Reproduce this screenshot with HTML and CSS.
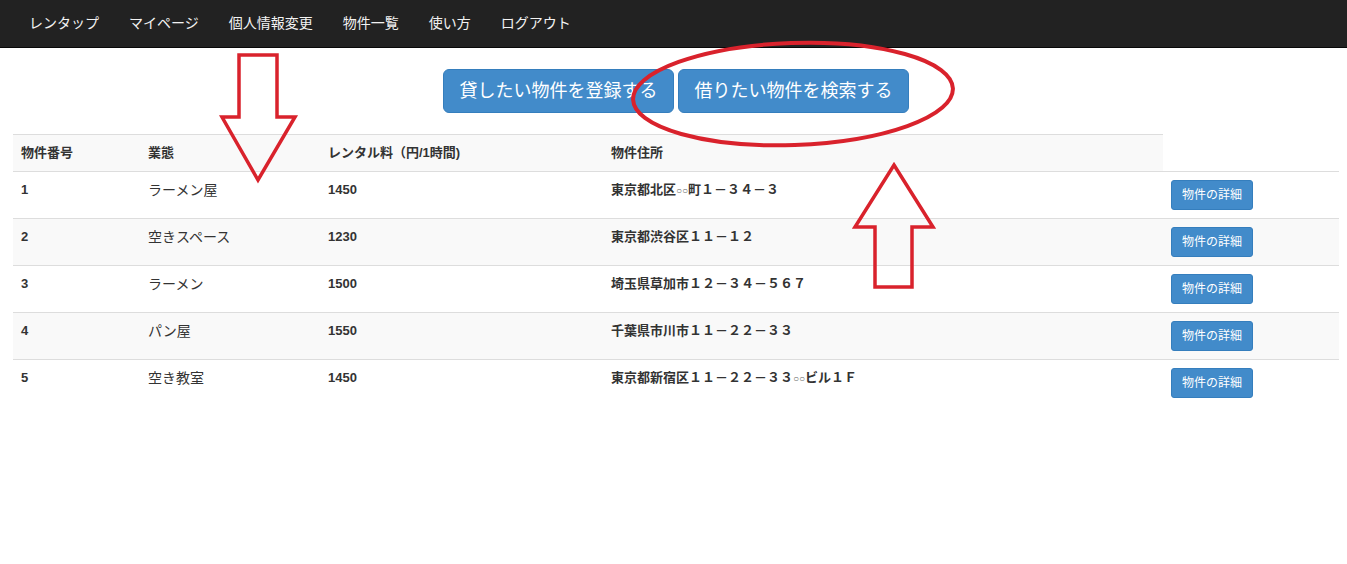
FILE: index.html
```html
<!DOCTYPE html>
<html lang="ja">
<head>
<meta charset="utf-8">
<title>レンタップ</title>
<link rel="stylesheet" href="styles.css">
</head>
<body>
<nav class="navbar">
  <a class="nav-link" href="#">レンタップ</a>
  <a class="nav-link" href="#">マイページ</a>
  <a class="nav-link" href="#">個人情報変更</a>
  <a class="nav-link" href="#">物件一覧</a>
  <a class="nav-link" href="#">使い方</a>
  <a class="nav-link" href="#">ログアウト</a>
</nav>
<main class="content">
  <div class="actions">
    <a class="btn btn-lg" href="#">貸したい物件を登録する</a>
    <a class="btn btn-lg" href="#">借りたい物件を検索する</a>
  </div>
  <table class="table">
    <colgroup>
      <col class="c1"><col class="c2"><col class="c3"><col class="c4"><col class="c5">
    </colgroup>
    <tbody>
      <tr>
        <th>物件番号</th><th>業態</th><th>レンタル料（円/1時間)</th><th>物件住所</th>
      </tr>
      <tr>
        <td class="b">1</td><td>ラーメン屋</td><td class="b">1450</td><td class="b">東京都北区<span class="small">○○</span>町１－３４－３</td>
        <td><a class="btn btn-sm" href="#">物件の詳細</a></td>
      </tr>
      <tr>
        <td class="b">2</td><td>空きスペース</td><td class="b">1230</td><td class="b">東京都渋谷区１１－１２</td>
        <td><a class="btn btn-sm" href="#">物件の詳細</a></td>
      </tr>
      <tr>
        <td class="b">3</td><td>ラーメン</td><td class="b">1500</td><td class="b">埼玉県草加市１２－３４－５６７</td>
        <td><a class="btn btn-sm" href="#">物件の詳細</a></td>
      </tr>
      <tr>
        <td class="b">4</td><td>パン屋</td><td class="b">1550</td><td class="b">千葉県市川市１１－２２－３３</td>
        <td><a class="btn btn-sm" href="#">物件の詳細</a></td>
      </tr>
      <tr>
        <td class="b">5</td><td>空き教室</td><td class="b">1450</td><td class="b">東京都新宿区１１－２２－３３<span class="small">○○</span>ビル１Ｆ</td>
        <td><a class="btn btn-sm" href="#">物件の詳細</a></td>
      </tr>
    </tbody>
  </table>
</main>
<svg class="annotations" width="1347" height="564" viewBox="0 0 1347 564" aria-hidden="true">
  <polygon points="239,55 277,55 277,117 295,117 258,180 222,117 239,117" />
  <polygon points="894,165 933,227 912,227 912,287 875,287 875,227 855,227" />
  <ellipse cx="793" cy="94" rx="160" ry="51" transform="rotate(-2 793 94)" />
</svg>
</body>
</html>
```

FILE: styles.css
```css
html, body {
  margin: 0;
  padding: 0;
  background: #fff;
}

body {
  font-family: "Liberation Sans", "Noto Sans CJK JP", sans-serif;
  font-size: 14px;
  line-height: 20px;
  color: #333;
  position: relative;
  width: 1347px;
  height: 564px;
  overflow: hidden;
}

.navbar {
  display: flex;
  align-items: center;
  height: 47px;
  padding-left: 14px;
  background: #222;
  border-bottom: 1px solid #080808;
}

.nav-link {
  padding: 0 15px;
  color: #f2f2f2;
  text-decoration: none;
  font-size: 14px;
  line-height: 20px;
  margin-top: -2px;
}

.content {
  padding: 21px 8px 0 13px;
}

.actions {
  display: flex;
  justify-content: center;
  gap: 4px;
  margin-bottom: 21px;
}

.btn {
  display: inline-block;
  color: #fff;
  background: #428bca;
  border: 1px solid #357ebd;
  text-decoration: none;
  text-align: center;
  white-space: nowrap;
}

.btn-lg {
  font-size: 18px;
  line-height: 22px;
  padding: 10px 15.5px;
  border-radius: 6px;
}

.btn-sm {
  font-size: 12px;
  line-height: 18px;
  padding: 5px 10px;
  border-radius: 3px;
}

.table {
  width: 1326px;
  table-layout: fixed;
  border-collapse: collapse;
  border-spacing: 0;
}

.c1 { width: 127px; }
.c2 { width: 180px; }
.c3 { width: 283px; }
.c4 { width: 560px; }
.c5 { width: 176px; }

.table th,
.table td {
  padding: 8px;
  text-align: left;
  vertical-align: top;
  border-top: 1px solid #ddd;
  line-height: 20px;
  background: #fff;
}

.table th {
  font-weight: bold;
  font-size: 13px;
  background: #f9f9f9;
}

.table tr:nth-child(odd) td {
  background: #f9f9f9;
}

.b {
  font-weight: bold;
}

.table td.b {
  font-size: 13px;
}

.small {
  font-size: 10px;
  font-weight: normal;
  color: #666;
}

.annotations {
  position: absolute;
  left: 0;
  top: 0;
  pointer-events: none;
}

.annotations polygon,
.annotations ellipse {
  fill: none;
  stroke: #d9222c;
  stroke-width: 3.5;
  stroke-linejoin: miter;
}

.annotations ellipse {
  stroke-width: 4;
}
```
